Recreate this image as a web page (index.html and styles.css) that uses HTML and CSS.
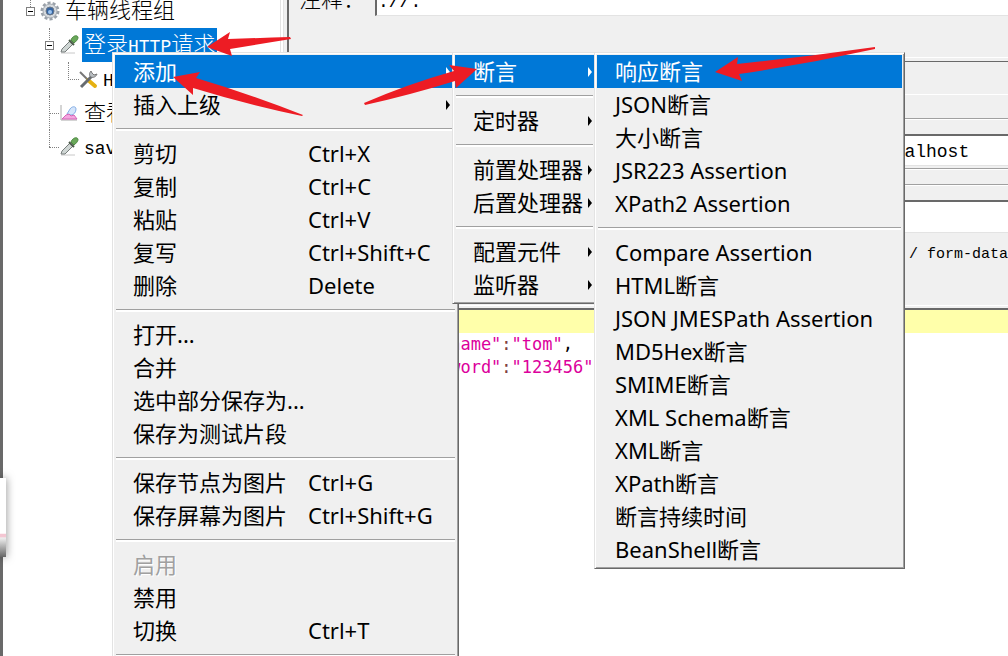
FILE: index.html
```html
<!DOCTYPE html>
<html lang="zh-CN">
<head>
    <meta charset="UTF-8">
    <meta name="viewport" content="width=device-width, initial-scale=1.0">
    <title>JMeter</title>
    <link rel="stylesheet" href="styles.css">
</head>
<body>
    <div class="app">
        <aside class="sidebar">
            <ul class="tree">
                <li class="node level-1">
                    <span class="toggle"></span>
                    <svg class="icon" viewBox="0 0 20 20">
                        <circle cx="10" cy="10" r="8" fill="none" stroke="#9aa1a9" stroke-width="3" stroke-dasharray="3 2"/>
                        <circle cx="10" cy="10" r="7" fill="#d5d9dd" stroke="#a5abb2"/>
                        <circle cx="10" cy="10" r="4" fill="#3465a4" stroke="#6a7686"/>
                        <circle cx="10" cy="11" r="2" fill="#9cc4ef"/>
                    </svg>
                    <span class="name">车辆线程组</span>
                </li>
                <li class="node level-2">
                    <span class="toggle"></span>
                    <svg class="icon" viewBox="0 0 20 20"><use href="#dropper"/></svg>
                    <span class="name selected">登录<span class="latin">HTTP</span>请求</span>
                </li>
                <li class="node level-3">
                    <svg class="icon" viewBox="0 0 20 20">
                        <path d="M2 3l8 8" stroke="#777" stroke-width="2"/>
                        <path d="M10 11l7 6" stroke="#e5b112" stroke-width="4" stroke-linecap="round"/>
                        <path d="M3 18L14 7" stroke="#666b70" stroke-width="3"/>
                        <path d="M13 2c-2 2-2 5 0 6s5 0 6-3l-3 1-2-2z" fill="#b9bec2" stroke="#777"/>
                    </svg>
                    <span class="name"><span class="latin">HTTP</span>信息头管理器</span>
                </li>
                <li class="node level-2 leaf">
                    <svg class="icon" viewBox="0 0 20 20">
                        <path d="M2 2v15h16" fill="none" stroke="#aaa"/>
                        <path d="M8 11l3-5c2-3 6-3 6 0s-2 6-5 6z" fill="#d4e5fb" stroke="#86afe5"/>
                        <path d="M3 16l4-4 3-1 2 2 3-1 3 4z" fill="#f5a6e0" stroke="#d565b8"/>
                    </svg>
                    <span class="name">查看结果树</span>
                </li>
                <li class="node level-2 leaf">
                    <svg class="icon" viewBox="0 0 20 20"><use href="#dropper"/></svg>
                    <span class="name"><span class="latin">save</span></span>
                </li>
            </ul>
        </aside>

        <main class="editor">
            <div class="comment-row">
                <label for="comment">注释：</label>
                <input type="text" id="comment" value="://:">
            </div>
            <div class="tab-edge"></div>
            <section class="request">
                <div class="group-title"></div>
                <div class="group-edge"></div>
                <input class="field host" type="text" aria-label="服务器名称或IP" value="localhost">
                <div class="group-end"></div>
                <div class="group-next"></div>
                <input class="field path" type="text" aria-label="路径">
                <div class="options">
                    <input type="checkbox" id="multipart">
                    <label for="multipart">multipart / form-data</label>
                </div>
            </section>
            <pre class="code"><span class="line current">{</span><span class="line"><b>"username"</b><i>:</i><b>"tom"</b>,</span><span class="line"><b>"password"</b><i>:</i><b>"123456"</b></span></pre>
        </main>
    </div>

    <div class="dock"></div>

    <ul class="menu menu-main">
        <li><button class="item active more">添加</button></li>
        <li><button class="item more">插入上级</button></li>
        <li class="sep"></li>
        <li><button class="item">剪切<kbd>Ctrl+X</kbd></button></li>
        <li><button class="item">复制<kbd>Ctrl+C</kbd></button></li>
        <li><button class="item">粘贴<kbd>Ctrl+V</kbd></button></li>
        <li><button class="item">复写<kbd>Ctrl+Shift+C</kbd></button></li>
        <li><button class="item">删除<kbd>Delete</kbd></button></li>
        <li class="sep"></li>
        <li><button class="item">打开...</button></li>
        <li><button class="item">合并</button></li>
        <li><button class="item">选中部分保存为...</button></li>
        <li><button class="item">保存为测试片段</button></li>
        <li class="sep"></li>
        <li><button class="item">保存节点为图片<kbd>Ctrl+G</kbd></button></li>
        <li><button class="item">保存屏幕为图片<kbd>Ctrl+Shift+G</kbd></button></li>
        <li class="sep"></li>
        <li><button class="item" disabled>启用</button></li>
        <li><button class="item">禁用</button></li>
        <li><button class="item">切换<kbd>Ctrl+T</kbd></button></li>
        <li class="sep"></li>
    </ul>

    <ul class="menu menu-add">
        <li><button class="item active more">断言</button></li>
        <li class="sep"></li>
        <li><button class="item more">定时器</button></li>
        <li class="sep"></li>
        <li><button class="item more">前置处理器</button></li>
        <li><button class="item more">后置处理器</button></li>
        <li class="sep"></li>
        <li><button class="item more">配置元件</button></li>
        <li><button class="item more">监听器</button></li>
    </ul>

    <ul class="menu menu-assert">
        <li><button class="item active">响应断言</button></li>
        <li><button class="item">JSON断言</button></li>
        <li><button class="item">大小断言</button></li>
        <li><button class="item">JSR223 Assertion</button></li>
        <li><button class="item">XPath2 Assertion</button></li>
        <li class="sep"></li>
        <li><button class="item">Compare Assertion</button></li>
        <li><button class="item">HTML断言</button></li>
        <li><button class="item">JSON JMESPath Assertion</button></li>
        <li><button class="item">MD5Hex断言</button></li>
        <li><button class="item">SMIME断言</button></li>
        <li><button class="item">XML Schema断言</button></li>
        <li><button class="item">XML断言</button></li>
        <li><button class="item">XPath断言</button></li>
        <li><button class="item">断言持续时间</button></li>
        <li><button class="item">BeanShell断言</button></li>
    </ul>

    <!-- red pointer arrows -->
    <svg class="arrows" width="1008" height="656" viewBox="0 0 1008 656">
        <path d="M207 47L230 32L228 39Q260 38 290 37L291 39Q260 44 230 49L232 56Z"/>
        <path d="M173 77L200 72L196 78Q250 94 303 115L302 116Q245 104 193 88L193 95Z"/>
        <path d="M477 69L449 65L454 71Q408 84 364 103L365 105Q410 95 455 81L456 88Z"/>
        <path d="M715 72L738 57L737 64Q805 57 875 47L875 49Q807 64 739 74L742 81Z"/>
    </svg>

    <svg class="defs" width="0" height="0">
        <symbol id="dropper" viewBox="0 0 20 20">
            <path d="M2 18h14" stroke="#c8c8c8"/>
            <path d="M2 17l1-3 8-8 3 3-8 8z" fill="#cfd6d4" stroke="#777d7c"/>
            <path d="M10 5l5 5" stroke="#4c5a4a" stroke-width="2"/>
            <path d="M12 5c1-3 4-5 6-4s1 4-3 7z" fill="#6aa85a" stroke="#4d8842"/>
        </symbol>
    </svg>
</body>
</html>
```
FILE: styles.css
```css
* {
    box-sizing: border-box;
}
body {
    margin: 0;
    height: 100vh;
    overflow: hidden;
    position: relative;
    background: #f0f0f0;
    color: #000;
    font-family: "Noto Sans", "Noto Sans CJK SC", sans-serif;
    font-size: 22px;
}
ul {
    list-style: none;
    margin: 0;
    padding: 0;
}
.app {
    display: flex;
    height: 100%;
}

/* test plan tree */
.sidebar {
    width: 284px;
    flex-shrink: 0;
    background: white;
    border-left: 3px solid #696969;
    border-right: 1px solid #e3e3e3;
    box-shadow: inset -2px 0 white, inset -3px 0 #e3e3e3;
    overflow: hidden;
}
.tree {
    margin-top: -6px;
    font-family: "Liberation Mono", "Noto Sans CJK SC", monospace;
    font-weight: 300;
}
.node {
    position: relative;
    display: flex;
    align-items: center;
    height: 34px;
    line-height: 30px;
    white-space: nowrap;
}
.level-1 { padding-left: 23px; }
.level-2 { padding-left: 42px; }
.level-3 { padding-left: 75px; }
.leaf { padding-left: 56px; }
.toggle {
    position: relative;
    z-index: 1;
    width: 9px;
    height: 9px;
    margin-right: 5px;
    border: 1px solid #808080;
    background: linear-gradient(#000, #000) center / 5px 1px no-repeat white;
}
.node::before {
    content: "";
    position: absolute;
    left: 46px;
    top: 0;
    height: 100%;
    border-left: 1px dotted #808080;
}
.level-1::before {
    left: 27px;
    height: 50%;
}
.level-3::after,
.leaf::after {
    content: "";
    position: absolute;
    left: 46px;
    top: 50%;
    width: 10px;
    border-top: 1px dotted #808080;
}
.level-3::after {
    left: 65px;
    top: 0;
    height: 50%;
    border: 1px dotted #808080;
    border-width: 0 0 1px 1px;
}
.leaf:last-child::before { height: 50%; }
.icon {
    width: 20px;
    height: 20px;
    margin-right: 3px;
}
.name {
    height: 34px;
    padding: 4px 2px 0;
}
.latin {
    font-size: 18px;
}
.selected {
    background: #0078d7;
    color: white;
}

/* request editor */
.editor {
    flex: 1;
    min-width: 0;
    margin-left: 3px;
    border-left: 2px solid #696969;
    display: flex;
    flex-direction: column;
}
.comment-row {
    display: flex;
    margin-top: -18px;
    height: 34px;
    align-items: stretch;
    padding-left: 10px;
    line-height: 32px;
    font-weight: 300;
}
.comment-row label {
    width: 76px;
}
.comment-row input {
    flex: 1;
    min-width: 0;
    border: 1px solid #e3e3e3;
    border-left: 2px solid #696969;
    border-right: 0;
    padding: 6px 1px 0;
    font-family: "Liberation Mono", monospace;
    font-size: 18px;
}
.tab-edge {
    margin-top: 41px;
    height: 5px;
    border-top: 1px solid white;
    border-bottom: 1px solid #696969;
}
.group-title {
    height: 33px;
    border-bottom: 1px solid white;
}
.group-edge {
    height: 25px;
    border-bottom: 1px solid white;
    box-shadow: inset 0 -1px #a0a0a0;
}
.field {
    display: block;
    width: 100%;
    border: 0;
    border-top: 2px solid #696969;
    border-bottom: 1px solid #e3e3e3;
    font-family: "Liberation Mono", monospace;
    font-size: 18px;
}
.host {
    height: 32px;
    margin-top: 14px;
    padding: 2px 0 0 583px;
}
.group-end {
    height: 4px;
    border-bottom: 1px solid white;
    box-shadow: inset 0 -1px #a0a0a0;
}
.group-next {
    height: 16px;
    border-bottom: 1px solid white;
    box-shadow: inset 0 -1px #a0a0a0;
}
.path {
    height: 33px;
    margin-top: 14px;
}
.options {
    display: flex;
    align-items: center;
    gap: 6px;
    height: 73px;
    padding: 0 0 30px 508px;
    border-bottom: 1px solid white;
    white-space: nowrap;
    font-family: "Liberation Mono", monospace;
    font-size: 15px;
}
.options input {
    width: 16px;
    height: 16px;
    margin: 0;
}
.code {
    flex: 1;
    margin: 2px 0 0;
    border-top: 2px solid #696969;
    background: white;
    font-family: "DejaVu Sans Mono", monospace;
    font-size: 17px;
    line-height: 23px;
}
.line {
    display: block;
    padding-left: 110px;
}
.current {
    background: #ffffaa;
}
.code b {
    color: #dc009c;
    font-weight: normal;
}
.code i {
    color: #804040;
    font-style: normal;
}

.dock {
    position: absolute;
    left: 0;
    top: 478px;
    width: 6px;
    height: 79px;
    background: linear-gradient(white 70%, #f4c6d2 71%, #f4c6d2 74%, #eee 76%, #666);
    box-shadow: 0 0 8px rgba(0, 0, 0, 0.5);
}

/* popup menus */
.menu {
    position: absolute;
    top: 52px;
    padding: 2px 2px 2px 2px;
    background: #f0f0f0;
    border: 1px solid #e3e3e3;
    border-right-color: #696969;
    border-bottom-color: #696969;
    box-shadow: inset 1px 1px white, inset -1px -1px #a0a0a0;
}
.menu-main {
    left: 112px;
    width: 347px;
    height: 620px;
}
.menu-add {
    left: 452px;
    width: 145px;
}
.menu-assert {
    left: 594px;
    width: 311px;
}
.item {
    position: relative;
    display: flex;
    align-items: center;
    width: 100%;
    height: 33px;
    padding: 0 0 0 18px;
    border: 0;
    background: none;
    color: #000;
    font-family: inherit;
    font-size: 22px;
    line-height: 33px;
    text-align: left;
    white-space: nowrap;
}
.item:disabled {
    color: #a0a0a0;
    text-shadow: 1px 1px white;
}
.active,
.item:hover {
    background: #0078d7;
    color: white;
}
.item kbd {
    position: absolute;
    left: 193px;
    font-family: inherit;
}
.more::after {
    content: "";
    position: absolute;
    right: 6px;
    border: 5px solid transparent;
    border-left: 4px solid currentColor;
    border-right: 0;
}
.menu-add .more::after {
    right: 2px;
}
.sep {
    height: 16px;
    padding: 7px 1px 0;
}
.sep::before {
    content: "";
    display: block;
    height: 2px;
    border-top: 1px solid #a0a0a0;
    background: white;
}

.arrows {
    position: absolute;
    left: 0;
    top: 0;
    fill: #ed1c24;
    pointer-events: none;
}
.defs {
    position: absolute;
}
```
